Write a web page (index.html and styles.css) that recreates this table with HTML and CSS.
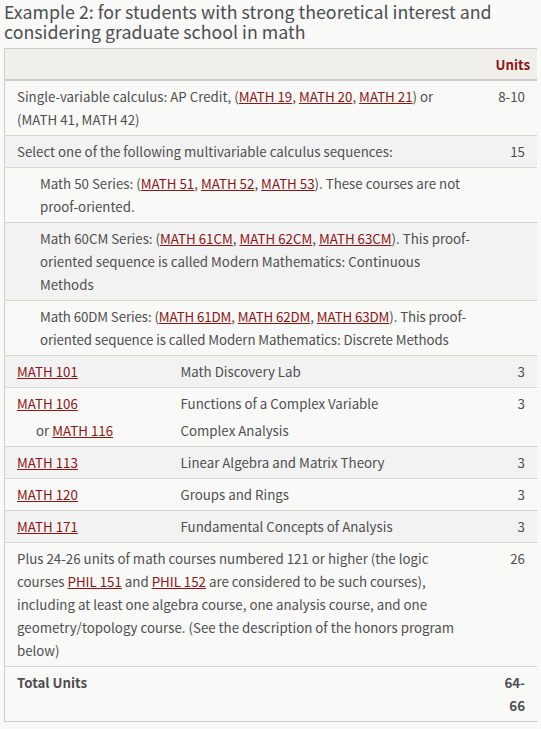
FILE: index.html
```html
<!DOCTYPE html>
<html lang="en">
<head>
<meta charset="utf-8">
<title>Example 2</title>
<link rel="stylesheet" href="styles.css">
</head>
<body>
<h3 class="title">Example 2: for students with strong theoretical interest and considering graduate school in math</h3>
<table class="courses">
  <colgroup>
    <col class="c-code">
    <col class="c-title">
    <col class="c-units">
  </colgroup>
  <thead>
    <tr class="head">
      <th colspan="2"></th>
      <th class="units">Units</th>
    </tr>
  </thead>
  <tbody>
    <tr class="odd">
      <td colspan="2">Single-variable calculus: AP Credit, (<a href="#">MATH 19</a>, <a href="#">MATH 20</a>, <a href="#">MATH 21</a>) or (MATH 41, MATH 42)</td>
      <td class="units">8-10</td>
    </tr>
    <tr class="even">
      <td colspan="2">Select one of the following multivariable calculus sequences:</td>
      <td class="units">15</td>
    </tr>
    <tr class="odd">
      <td colspan="2"><div class="indent">Math 50 Series: (<a href="#">MATH 51</a>, <a href="#">MATH 52</a>, <a href="#">MATH 53</a>). These courses are not proof-oriented.</div></td>
      <td class="units"></td>
    </tr>
    <tr class="even">
      <td colspan="2"><div class="indent">Math 60CM Series: (<a href="#">MATH 61CM</a>, <a href="#">MATH 62CM</a>, <a href="#">MATH 63CM</a>). This proof-<wbr>oriented sequence is called Modern Mathematics: Continuous Methods</div></td>
      <td class="units"></td>
    </tr>
    <tr class="odd">
      <td colspan="2"><div class="indent tight">Math 60DM Series: (<a href="#">MATH 61DM</a>, <a href="#">MATH 62DM</a>, <a href="#">MATH 63DM</a>). This proof-<wbr>oriented sequence is called Modern Mathematics: Discrete Methods</div></td>
      <td class="units"></td>
    </tr>
    <tr class="even">
      <td><a href="#">MATH 101</a></td>
      <td>Math Discovery Lab</td>
      <td class="units">3</td>
    </tr>
    <tr class="odd">
      <td><a href="#">MATH 106</a><div class="or">or <a href="#">MATH 116</a></div></td>
      <td>Functions of a Complex Variable<div class="alt">Complex Analysis</div></td>
      <td class="units">3</td>
    </tr>
    <tr class="even">
      <td><a href="#">MATH 113</a></td>
      <td>Linear Algebra and Matrix Theory</td>
      <td class="units">3</td>
    </tr>
    <tr class="odd">
      <td><a href="#">MATH 120</a></td>
      <td>Groups and Rings</td>
      <td class="units">3</td>
    </tr>
    <tr class="even">
      <td><a href="#">MATH 171</a></td>
      <td>Fundamental Concepts of Analysis</td>
      <td class="units">3</td>
    </tr>
    <tr class="odd">
      <td colspan="2">Plus 24-26 units of math courses numbered 121 or higher (the logic courses <a href="#">PHIL 151</a> and <a href="#">PHIL 152</a> are considered to be such courses), including at least one algebra course, one analysis course, and one geometry/topology course. (See the description of the honors program below)</td>
      <td class="units">26</td>
    </tr>
  </tbody>
  <tfoot>
    <tr class="total">
      <td colspan="2">Total Units</td>
      <td class="units">64-66</td>
    </tr>
  </tfoot>
</table>
</body>
</html>
```
FILE: styles.css
```css
html, body {
  background: #f9f9f7;
}
body {
  margin: 0 4px;
  font-family: "Noto Sans CJK SC", Lato, sans-serif;
  color: #4f4f4f;
}
.title {
  margin: 0 0 7px 0;
  padding-top: 1px;
  font-size: 17.8px;
  line-height: 20px;
  font-weight: 400;
  color: #4d4f53;
}
.courses {
  width: 533px;
  table-layout: fixed;
  border-collapse: collapse;
  border: 1px solid #cdcdcd;
  font-size: 13.3px;
  line-height: 23px;
}
.c-code { width: 164px; }
.c-title { width: 315px; }
.c-units { width: 54px; }
.courses th,
.courses td {
  padding: 4px 12px 4px 12px;
  vertical-align: top;
  text-align: left;
  word-wrap: break-word;
}
.courses .units {
  text-align: right;
}
.head th {
  padding-top: 4px;
  padding-bottom: 3px;
  background: #f0efea;
  border-bottom: 2px solid #cdcdcd;
  font-weight: 700;
  color: #8c1515;
  white-space: nowrap;
}
tbody tr {
  border-bottom: 1px solid #d6d6d6;
}
tr.odd { background: #f9f9f7; }
tr.even { background: #f2f2f2; }
tr.total { background: #f9f9f7; }
tr.total td { font-weight: 700; }
.indent {
  padding-left: 23px;
}
.indent.tight {
  letter-spacing: -0.1px;
}
.or {
  padding-left: 19px;
  margin-top: 4px;
}
.alt {
  margin-top: 4px;
}
a {
  color: #8c1515;
  text-decoration: underline;
}
```
